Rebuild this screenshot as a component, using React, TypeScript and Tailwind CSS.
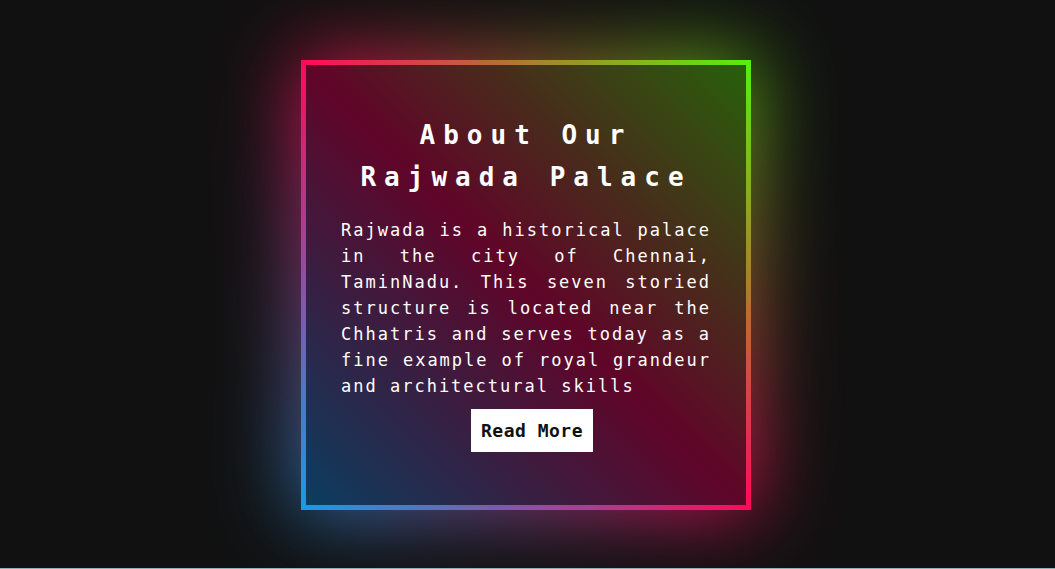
export default function App() {
  return (
    <div className="flex min-h-[569px] flex-col bg-[#111111]" style={{ fontFamily: '"DejaVu Sans Mono", "Liberation Mono", monospace' }}>
      <div className="flex h-[568px] items-start justify-center overflow-hidden pt-[60px] pr-[3px]">
        {/* card */}
        <div className="relative h-[450px] w-[450px]">
          {/* glow */}
          <div className="absolute -inset-[6px] bg-[linear-gradient(45deg,#149cec,#ff0a5a,#58f00a)] opacity-75 blur-[40px]" />
          {/* border */}
          <div className="relative h-full w-full bg-[linear-gradient(45deg,#149cec,#ff0a5a,#58f00a)] p-[5px]">
            <div className="flex h-full w-full flex-col items-center justify-center bg-[linear-gradient(45deg,#0a3d60,#600528,#28600a)] px-[35px] text-white">
              <h2 className="-mt-[4px] text-center text-[26px] leading-[42px] font-bold tracking-[8px]">
                About Our
                <br />
                Rajwada Palace
              </h2>
              <p className="mt-[19px] text-justify text-[17px] leading-[26px] tracking-[2px]">
                Rajwada is a historical palace in the city of Chennai, TaminNadu. This seven storied structure is located near the Chhatris and serves today as a fine example of royal grandeur and architectural skills
              </p>
              <button className="mt-[10px] ml-[12px] bg-white px-[10px] py-[9px] text-[18px] leading-[25px] font-bold tracking-[0.5px] text-[#111]">
                Read More
              </button>
            </div>
          </div>
        </div>
      </div>
      <div className="h-px bg-[#8fb3b5]" />
    </div>
  );
}
